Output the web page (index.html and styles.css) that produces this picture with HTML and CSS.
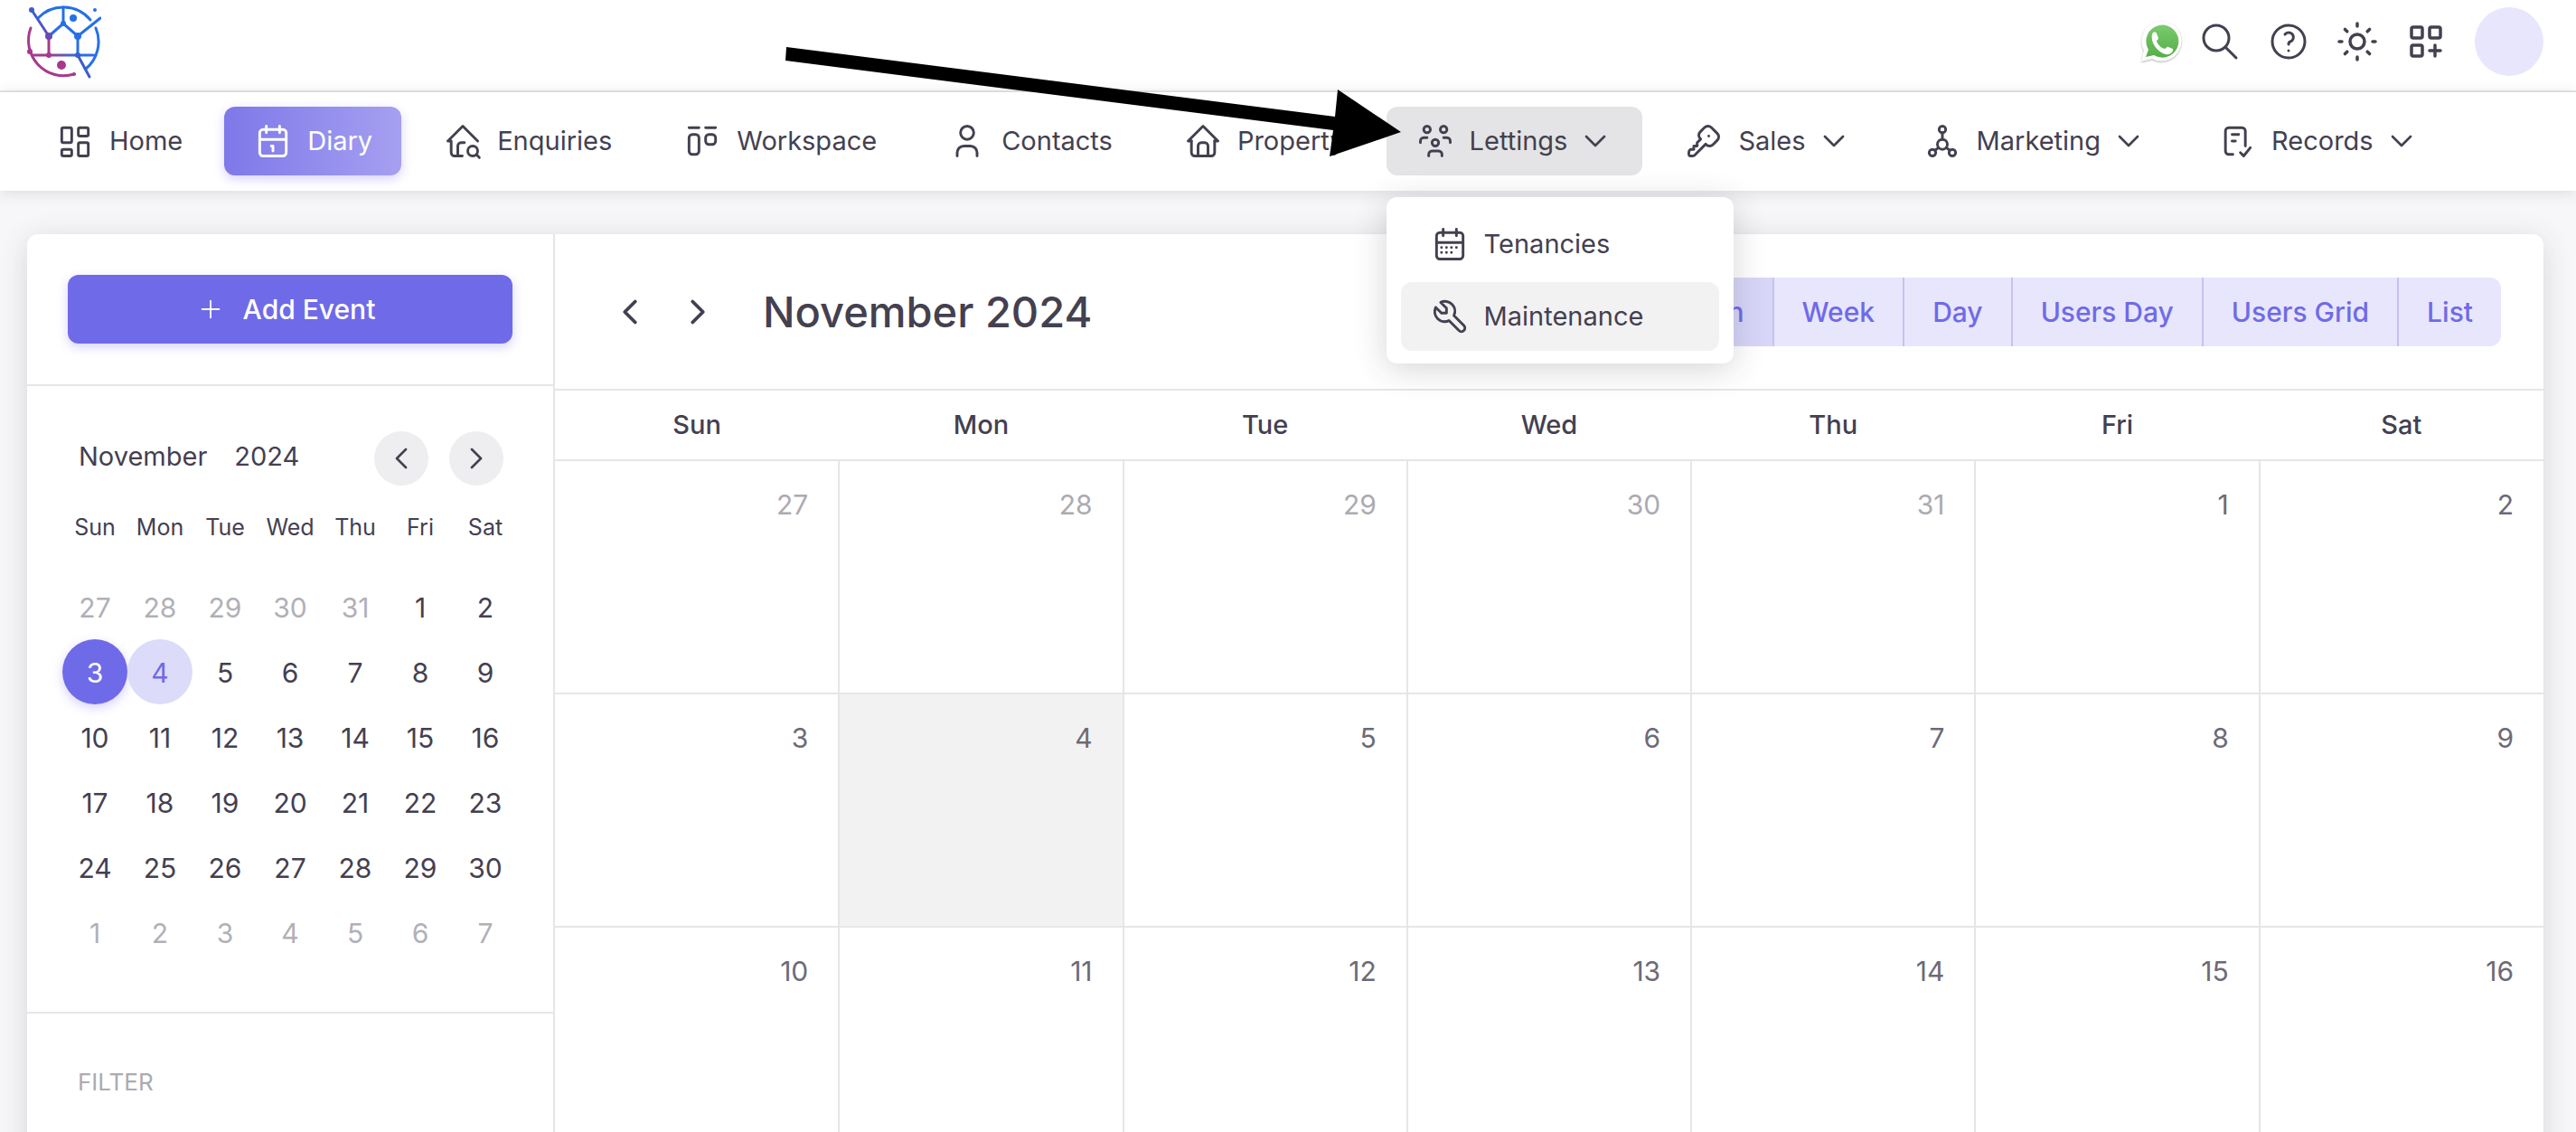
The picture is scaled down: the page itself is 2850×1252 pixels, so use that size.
FILE: index.html
```html
<!DOCTYPE html>
<html lang="en">
<head>
    <meta charset="UTF-8">
    <meta name="viewport" content="width=device-width, initial-scale=1.0">
    <title>Diary</title>
    <link rel="stylesheet" href="styles.css">
</head>
<body>

    <header class="topbar">
        <a href="#" class="logo" aria-label="Home">
            <svg width="84" height="84" viewBox="28 5 84 84" fill="none" stroke-width="3" stroke-linecap="round">
                <defs>
                    <linearGradient id="brand" gradientUnits="userSpaceOnUse" x1="46" y1="60" x2="84" y2="56">
                        <stop offset="0.2" stop-color="#a63a8c"/>
                        <stop offset="1" stop-color="#2a6fe6"/>
                    </linearGradient>
                    <linearGradient id="brandDown" gradientUnits="userSpaceOnUse" x1="35" y1="12" x2="56" y2="46">
                        <stop offset="0" stop-color="#2e62d9"/>
                        <stop offset="1" stop-color="#7546a8"/>
                    </linearGradient>
                </defs>
                <g stroke="#2470e8">
                    <path d="M42 21A39 39 0 0 1 100 23"/>
                    <path d="M106 32A39 39 0 0 1 95 77"/>
                    <path d="M70 9V27M54 41L70 27L86 41L111 21M86 41V62"/>
                </g>
                <path stroke="#3f5cc8" d="M86 62L99 86"/>
                <path stroke="url(#brandDown)" d="M35 12L54 41"/>
                <path stroke="#a63a8c" d="M34 32A39 39 0 0 0 82 83M54 41V62"/>
                <path stroke="url(#brand)" d="M36 62H104"/>
                <circle cx="35" cy="12" r="3" fill="#3f5cc8"/>
                <circle cx="54" cy="41" r="4" fill="#6a4bb4"/>
                <g fill="#2470e8">
                    <circle cx="105" cy="12" r="2"/>
                    <circle cx="81" cy="21" r="4"/>
                    <circle cx="70" cy="27" r="3"/>
                    <circle cx="86" cy="41" r="4"/>
                </g>
                <circle cx="86" cy="62" r="3" fill="#3f5cc8"/>
                <g fill="#a63a8c">
                    <circle cx="33" cy="58" r="3"/>
                    <circle cx="54" cy="62" r="3"/>
                    <circle cx="68" cy="73" r="5"/>
                    <circle cx="82" cy="83" r="2"/>
                </g>
            </svg>
        </a>

        <div class="topbar-actions">
            <a href="#" class="whatsapp" aria-label="WhatsApp">
                <svg width="48" height="48" viewBox="0 0 48 48">
                    <defs>
                        <linearGradient id="wa" x1="0" y1="0" x2="0" y2="1">
                            <stop offset="0" stop-color="#7acb6c"/>
                            <stop offset="1" stop-color="#55ae48"/>
                        </linearGradient>
                    </defs>
                    <path class="whatsapp-edge" fill="#fff" d="M2 46L5 34A22 22 0 1 1 14 43Z"/>
                    <path fill="url(#wa)" d="M7 41L10 33A18 18 0 1 1 16 39Z"/>
                    <path fill="#fff" d="M14 16c1-3 4-3 5-1l2 5c0 2-2 2-2 4 2 4 5 7 9 8 2 0 2-3 4-2l5 2c1 4-4 7-8 6-8-2-17-12-15-22z"/>
                </svg>
            </a>
            <button class="icon-button" aria-label="Search">
                <svg class="icon" width="48" height="48" viewBox="0 0 24 24"><circle cx="10" cy="10" r="7"/><path d="M21 21l-6-6"/></svg>
            </button>
            <button class="icon-button" aria-label="Help">
                <svg class="icon" width="48" height="48" viewBox="0 0 24 24"><circle cx="12" cy="12" r="9"/><path d="M12 17v.01"/><path d="M12 13.5a1.5 1.5 0 0 1 1-1.5a2.6 2.6 0 1 0-3-4"/></svg>
            </button>
            <button class="icon-button" aria-label="Theme">
                <svg class="icon icon-bold" width="48" height="48" viewBox="0 0 24 24"><circle cx="12" cy="12" r="4"/><path d="M2 12h1.500M20.500 12h1.500M12 2v1.500M12 20.500v1.500M5.200 5.200l1.200 1.200M18.800 5.200l-1.200 1.200M17.600 17.600l1.200 1.200M6.400 17.600l-1.200 1.200"/></svg>
            </button>
            <button class="icon-button" aria-label="Shortcuts">
                <svg class="icon icon-bold" width="48" height="48" viewBox="0 0 24 24"><rect x="4" y="4" width="6" height="6" rx="1"/><rect x="14" y="4" width="6" height="6" rx="1"/><rect x="4" y="14" width="6" height="6" rx="1"/><path d="M14 17h6M17 14v6"/></svg>
            </button>
            <button class="avatar" aria-label="Account"></button>
        </div>
    </header>

    <nav class="navbar">
        <ul class="menu">
            <li>
                <a href="#" class="menu-link">
                    <svg class="icon" width="44" height="44" viewBox="0 0 24 24"><rect x="4" y="4" width="6" height="9" rx="1"/><rect x="4" y="17" width="6" height="4" rx="1"/><rect x="14" y="13" width="6" height="8" rx="1"/><rect x="14" y="4" width="6" height="5" rx="1"/></svg>
                    Home
                </a>
            </li>
            <li>
                <a href="#" class="menu-link active">
                    <svg class="icon" width="44" height="44" viewBox="0 0 24 24"><rect x="4" y="5" width="16" height="16" rx="2"/><path d="M16 3v4M8 3v4M4 11h16M11 15h1M12 15v3"/></svg>
                    Diary
                </a>
            </li>
            <li>
                <a href="#" class="menu-link">
                    <svg class="icon" width="44" height="44" viewBox="0 0 24 24"><path d="M21 12l-9-9l-9 9h2v7a2 2 0 0 0 2 2h4.700"/><path d="M9 21v-6a2 2 0 0 1 2-2h2"/><circle cx="18" cy="18" r="3"/><path d="M20.200 20.200l1.800 1.800"/></svg>
                    Enquiries
                </a>
            </li>
            <li>
                <a href="#" class="menu-link">
                    <svg class="icon" width="44" height="44" viewBox="0 0 24 24"><path d="M4 4h6M14 4h6"/><rect x="4" y="8" width="6" height="12" rx="2"/><rect x="14" y="8" width="6" height="6" rx="2"/></svg>
                    Workspace
                </a>
            </li>
            <li>
                <a href="#" class="menu-link">
                    <svg class="icon" width="44" height="44" viewBox="0 0 24 24"><circle cx="12" cy="7" r="4"/><path d="M6 21v-2a4 4 0 0 1 4-4h4a4 4 0 0 1 4 4v2"/></svg>
                    Contacts
                </a>
            </li>
            <li>
                <a href="#" class="menu-link">
                    <svg class="icon" width="44" height="44" viewBox="0 0 24 24"><path d="M5 12h-2l9-9l9 9h-2"/><path d="M5 12v7a2 2 0 0 0 2 2h10a2 2 0 0 0 2-2v-7"/><path d="M9 21v-6a2 2 0 0 1 2-2h2a2 2 0 0 1 2 2v6"/></svg>
                    Property
                </a>
            </li>
            <li class="has-submenu">
                <a href="#" class="menu-link open">
                    <svg class="icon" width="44" height="44" viewBox="0 0 24 24"><circle cx="12" cy="13" r="2"/><path d="M8 21v-1a2 2 0 0 1 2-2h4a2 2 0 0 1 2 2v1"/><circle cx="17" cy="5" r="2"/><path d="M17 10h2a2 2 0 0 1 2 2v1"/><circle cx="7" cy="5" r="2"/><path d="M3 13v-1a2 2 0 0 1 2-2h2"/></svg>
                    Lettings
                    <svg class="icon chevron" width="40" height="40" viewBox="0 0 24 24"><path d="M6 9l6 6l6-6"/></svg>
                </a>
                <ul class="submenu">
                    <li>
                        <a href="#" class="submenu-link">
                            <svg class="icon" width="44" height="44" viewBox="0 0 24 24"><rect x="4" y="5" width="16" height="16" rx="2"/><path d="M16 3v4M8 3v4M4 11h16M7 14h.01M10 14h.01M13 14h.01M16 14h.01M7 17h.01M10 17h.01M13 17h.01"/></svg>
                            Tenancies
                        </a>
                    </li>
                    <li>
                        <a href="#" class="submenu-link hover">
                            <svg class="icon" width="44" height="44" viewBox="0 0 24 24"><path d="M7 10h3v-3l-3.500-3.500a6 6 0 0 1 8 8l6 6a2 2 0 0 1-3 3l-6-6a6 6 0 0 1-8-8l3.500 3.500"/></svg>
                            Maintenance
                        </a>
                    </li>
                </ul>
                <svg class="pointer-arrow" width="684" height="124" viewBox="867 50 684 124"><path d="M870 52L1477 129L1480 99L1550 146L1471 173L1475 144L869 67Z"/></svg>
            </li>
            <li>
                <a href="#" class="menu-link">
                    <svg class="icon" width="44" height="44" viewBox="0 0 24 24"><path d="M16.555 3.843l3.602 3.602a2.877 2.877 0 0 1 0 4.069l-2.643 2.643a2.877 2.877 0 0 1-4.069 0l-.301-.301l-6.558 6.558a2 2 0 0 1-1.239.578l-.175.008h-1.172a1 1 0 0 1-.993-.883l-.007-.117v-1.172a2 2 0 0 1 .467-1.284l.119-.130l.414-.414h2v-2h2v-2l2.144-2.144l-.301-.301a2.877 2.877 0 0 1 0-4.069l2.643-2.643a2.877 2.877 0 0 1 4.069 0z"/><path d="M15 9h.01"/></svg>
                    Sales
                    <svg class="icon chevron" width="40" height="40" viewBox="0 0 24 24"><path d="M6 9l6 6l6-6"/></svg>
                </a>
            </li>
            <li>
                <a href="#" class="menu-link">
                    <svg class="icon" width="44" height="44" viewBox="0 0 24 24"><circle cx="12" cy="5" r="2"/><circle cx="6" cy="19" r="2"/><circle cx="18" cy="19" r="2"/><circle cx="12" cy="14" r="3"/><path d="M12 7v4M7.500 17.600l2.200-1.600M16.500 17.600l-2.200-1.600"/></svg>
                    Marketing
                    <svg class="icon chevron" width="40" height="40" viewBox="0 0 24 24"><path d="M6 9l6 6l6-6"/></svg>
                </a>
            </li>
            <li>
                <a href="#" class="menu-link">
                    <svg class="icon" width="44" height="44" viewBox="0 0 24 24"><path d="M9.500 20h-2.500a2 2 0 0 1-2-2v-12a2 2 0 0 1 2-2h8a2 2 0 0 1 2 2v9M9 8h4M9 12h2M14 19l2 2l4-5"/></svg>
                    Records
                    <svg class="icon chevron" width="40" height="40" viewBox="0 0 24 24"><path d="M6 9l6 6l6-6"/></svg>
                </a>
            </li>
        </ul>
    </nav>

    <main class="card">
        <aside class="sidebar">
            <div class="sidebar-top">
                <button class="add-button">
                    <svg class="icon" width="28" height="28" viewBox="0 0 24 24"><path d="M12 4v16M4 12h16"/></svg>
                    Add Event
                </button>
            </div>
            <div class="mini">
                <div class="mini-header">
                    <span class="mini-month">November</span>
                    <span class="mini-year">2024</span>
                    <button class="round-button" aria-label="Previous month">
                        <svg class="icon" width="40" height="40" viewBox="0 0 24 24"><path d="M15 6l-6 6l6 6"/></svg>
                    </button>
                    <button class="round-button" aria-label="Next month">
                        <svg class="icon" width="40" height="40" viewBox="0 0 24 24"><path d="M9 6l6 6l-6 6"/></svg>
                    </button>
                </div>
                <table class="mini-table">
                    <thead>
                        <tr><th>Sun</th><th>Mon</th><th>Tue</th><th>Wed</th><th>Thu</th><th>Fri</th><th>Sat</th></tr>
                    </thead>
                    <tbody>
                        <tr><td class="other">27</td><td class="other">28</td><td class="other">29</td><td class="other">30</td><td class="other">31</td><td>1</td><td>2</td></tr>
                        <tr><td class="selected">3</td><td class="today">4</td><td>5</td><td>6</td><td>7</td><td>8</td><td>9</td></tr>
                        <tr><td>10</td><td>11</td><td>12</td><td>13</td><td>14</td><td>15</td><td>16</td></tr>
                        <tr><td>17</td><td>18</td><td>19</td><td>20</td><td>21</td><td>22</td><td>23</td></tr>
                        <tr><td>24</td><td>25</td><td>26</td><td>27</td><td>28</td><td>29</td><td>30</td></tr>
                        <tr><td class="other">1</td><td class="other">2</td><td class="other">3</td><td class="other">4</td><td class="other">5</td><td class="other">6</td><td class="other">7</td></tr>
                    </tbody>
                </table>
            </div>
            <div class="filter">
                <h2 class="filter-title">FILTER</h2>
            </div>
        </aside>

        <section class="calendar">
            <div class="calendar-header">
                <button class="step-button" aria-label="Previous">
                    <svg class="icon icon-bold" width="46" height="46" viewBox="0 0 24 24"><path d="M15 6l-6 6l6 6"/></svg>
                </button>
                <button class="step-button" aria-label="Next">
                    <svg class="icon icon-bold" width="46" height="46" viewBox="0 0 24 24"><path d="M9 6l6 6l-6 6"/></svg>
                </button>
                <h1 class="calendar-title">November 2024</h1>
                <div class="views">
                    <button class="view active">Month</button>
                    <button class="view">Week</button>
                    <button class="view">Day</button>
                    <button class="view">Users Day</button>
                    <button class="view">Users Grid</button>
                    <button class="view">List</button>
                </div>
            </div>
            <table class="month">
                <thead>
                    <tr><th>Sun</th><th>Mon</th><th>Tue</th><th>Wed</th><th>Thu</th><th>Fri</th><th>Sat</th></tr>
                </thead>
                <tbody>
                    <tr><td class="other">27</td><td class="other">28</td><td class="other">29</td><td class="other">30</td><td class="other">31</td><td>1</td><td>2</td></tr>
                    <tr><td>3</td><td class="today">4</td><td>5</td><td>6</td><td>7</td><td>8</td><td>9</td></tr>
                    <tr><td>10</td><td>11</td><td>12</td><td>13</td><td>14</td><td>15</td><td>16</td></tr>
                </tbody>
            </table>
        </section>
    </main>

</body>
</html>
```

FILE: styles.css
```css
* {
    box-sizing: border-box;
}

body {
    margin: 0;
    height: 100vh;
    overflow: hidden;
    display: flex;
    flex-direction: column;
    background-color: #f7f7f9;
    color: #444050;
    font-family: Inter, "Liberation Sans", sans-serif;
    font-size: 29px;
    line-height: 44px;
}

button {
    font: inherit;
    color: inherit;
    border: none;
    background: none;
    padding: 0;
    cursor: pointer;
}

a {
    color: inherit;
    text-decoration: none;
}

ul {
    list-style: none;
    margin: 0;
    padding: 0;
}

table {
    border-collapse: collapse;
    table-layout: fixed;
    width: 100%;
}

th {
    font-weight: 400;
}

.icon {
    display: block;
    flex: none;
    fill: none;
    stroke: currentColor;
    stroke-width: 1.6;
    stroke-linecap: round;
    stroke-linejoin: round;
}

.icon-bold {
    stroke-width: 2;
}

/* top bar */
.topbar {
    display: flex;
    justify-content: space-between;
    align-items: center;
    flex: none;
    height: 102px;
    padding: 0 36px 8px 28px;
    background-color: #fff;
    border-bottom: 2px solid #e6e6e8;
}

.logo svg {
    display: block;
}

.topbar-actions {
    display: flex;
    align-items: center;
    gap: 28px;
}

.topbar-actions svg {
    display: block;
}

.topbar-actions .icon {
    stroke-width: 1.5;
}

.topbar-actions .icon-bold {
    stroke-width: 1.75;
}

.whatsapp {
    margin-right: -11px;
}

.whatsapp-edge {
    filter: drop-shadow(0 1px 1px rgba(0, 0, 0, 0.3));
}

.avatar {
    width: 76px;
    height: 76px;
    margin-left: 2px;
    border-radius: 50%;
    background-color: #e8e6fc;
}

/* navigation */
.navbar {
    flex: none;
    height: 109px;
    padding: 16px 29px;
    background-color: #fff;
    box-shadow: 0 2px 16px rgba(47, 43, 61, 0.14);
    position: relative;
    z-index: 2;
}

.menu {
    display: flex;
    gap: 14px;
}

.menu-link {
    display: flex;
    align-items: center;
    gap: 16px;
    height: 76px;
    padding: 0 32px;
    border-radius: 12px;
}

.menu-link .chevron {
    margin-left: -5px;
}

.menu-link.active {
    color: #fff;
    background: linear-gradient(90deg, #7e78e9, #a5a0f0);
    box-shadow: 0 4px 12px rgba(115, 103, 240, 0.3);
}

.menu-link.open {
    background-color: #e4e4e6;
}

.has-submenu {
    position: relative;
}

.submenu {
    position: absolute;
    top: 100px;
    left: 0;
    width: 384px;
    padding: 14px 16px;
    display: grid;
    gap: 4px;
    background-color: #fff;
    border-radius: 12px;
    box-shadow: 0 6px 36px rgba(47, 43, 61, 0.2);
}

.submenu-link {
    display: flex;
    align-items: center;
    gap: 16px;
    height: 76px;
    padding: 0 32px;
    border-radius: 12px;
}

.submenu-link.hover {
    background-color: #f2f2f3;
}

.pointer-arrow {
    position: absolute;
    top: -68px;
    left: -667px;
    pointer-events: none;
}

/* main card */
.card {
    flex: 1;
    display: flex;
    margin: 48px 36px 0 30px;
    background-color: #fff;
    border-radius: 12px 12px 0 0;
    box-shadow: 0 6px 32px rgba(47, 43, 61, 0.16);
}

.sidebar {
    width: 584px;
    flex: none;
    border-right: 2px solid #e6e6e8;
}

.sidebar-top {
    padding: 45px;
    border-bottom: 2px solid #e6e6e8;
}

.add-button {
    display: flex;
    align-items: center;
    justify-content: center;
    gap: 22px;
    width: 100%;
    height: 76px;
    padding-right: 8px;
    border-radius: 12px;
    background-color: #6f6ae8;
    color: #fff;
    font-size: 30px;
    font-weight: 500;
    box-shadow: 0 4px 12px rgba(115, 103, 240, 0.3);
}

.mini {
    padding: 50px 39px 52px;
    border-bottom: 2px solid #e6e6e8;
}

.mini-header {
    display: flex;
    align-items: center;
    padding: 0 16px 0 18px;
}

.mini-month,
.mini-year {
    padding-bottom: 4px;
}

.mini-year {
    margin: 0 auto 0 30px;
}

.round-button {
    display: grid;
    place-items: center;
    width: 60px;
    height: 60px;
    border-radius: 50%;
    background-color: #eeeef0;
}

.round-button + .round-button {
    margin-left: 23px;
}

.mini-table th {
    height: 98px;
    padding: 0 0 6px;
    font-size: 25px;
}

.mini-table td {
    height: 72px;
    padding: 2px 0 0;
    font-size: 30px;
    text-align: center;
}

.mini-table .selected {
    border-radius: 50%;
    background-color: #6f6ae8;
    color: #fff;
    box-shadow: 0 4px 12px rgba(115, 103, 240, 0.3);
}

.mini-table .today {
    border-radius: 50%;
    background-color: #dddbfa;
    color: #6f6ae8;
}

.other {
    color: #b1b0b6;
}

.filter {
    padding: 54px 56px;
}

.filter-title {
    margin: 0;
    font-size: 26px;
    font-weight: 400;
    color: #acaab1;
}

/* calendar */
.calendar {
    flex: 1;
}

.calendar-header {
    display: flex;
    align-items: center;
    height: 173px;
    padding: 0 47px 0 60px;
    border-bottom: 2px solid #e6e6e8;
}

.step-button + .step-button {
    margin-left: 29px;
}

.calendar-title {
    margin: 0 auto 0 49px;
    font-size: 47px;
    font-weight: 500;
}

.views {
    display: flex;
    border-radius: 12px;
    overflow: hidden;
    background-color: #e8e6fc;
}

.view {
    height: 76px;
    padding: 0 31px;
    color: #6f6ae8;
    font-size: 30px;
    font-weight: 500;
}

.view + .view {
    border-left: 2px solid #c5c2f3;
}

.view.active {
    background-color: #d8d6f8;
}

.month th {
    height: 77px;
    padding: 0;
    font-weight: 500;
}

.month td {
    height: 258px;
    padding: 26px 33px;
    vertical-align: top;
    text-align: right;
    font-size: 30px;
    color: #6d6a77;
    border-top: 2px solid #e6e6e8;
    border-left: 2px solid #e6e6e8;
}

.month td:first-child {
    border-left: none;
}

.month td.other {
    color: #acaab1;
}

.month td.today {
    background-color: #f2f2f2;
}
```
